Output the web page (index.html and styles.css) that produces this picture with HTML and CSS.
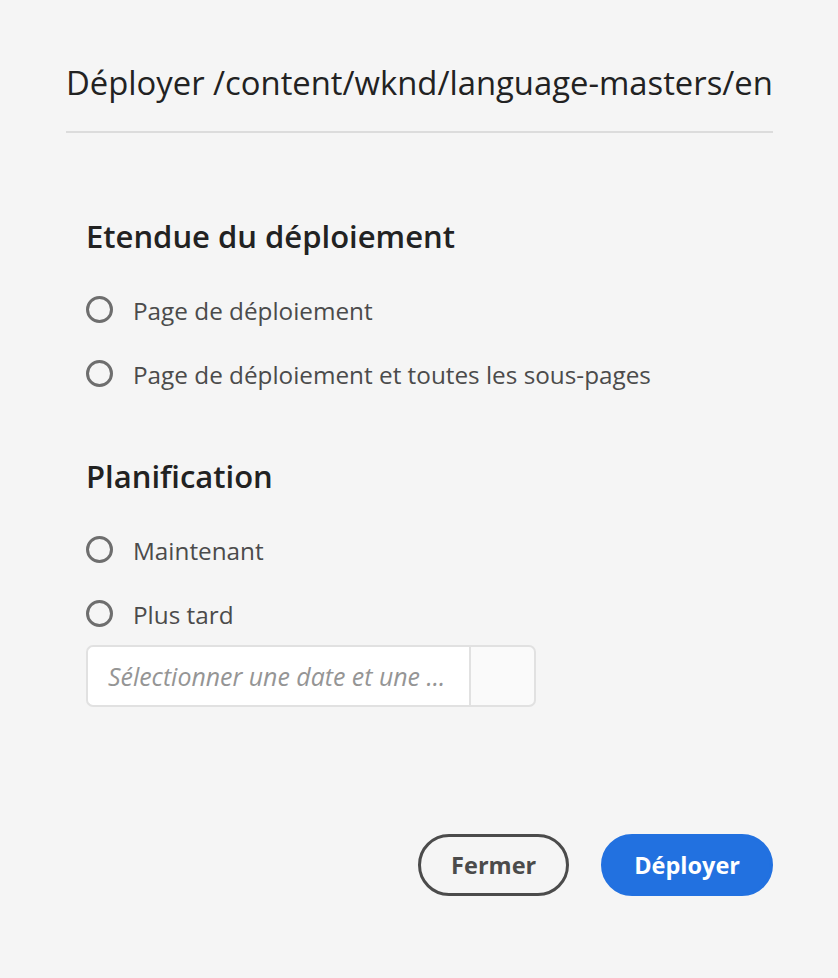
FILE: index.html
```html
<!DOCTYPE html>
<html lang="fr">
<head>
<meta charset="utf-8">
<title>Déployer</title>
<link rel="stylesheet" href="styles.css">
</head>
<body>
<div class="dialog">
  <h1 class="title">Déployer /content/wknd/language-masters/en</h1>
  <div class="divider"></div>
  <div class="content">
    <h2 class="heading first">Etendue du déploiement</h2>
    <div class="group">
      <label class="radio-row"><span class="radio"></span><span class="label">Page de déploiement</span></label>
      <label class="radio-row"><span class="radio"></span><span class="label">Page de déploiement et toutes les sous-pages</span></label>
    </div>
    <h2 class="heading second">Planification</h2>
    <div class="group">
      <label class="radio-row"><span class="radio"></span><span class="label">Maintenant</span></label>
      <label class="radio-row"><span class="radio"></span><span class="label">Plus tard</span></label>
    </div>
    <div class="datepicker">
      <div class="date-input">Sélectionner une date et une ...</div>
      <div class="date-button"></div>
    </div>
  </div>
  <div class="footer">
    <button class="btn btn-secondary">Fermer</button>
    <button class="btn btn-primary">Déployer</button>
  </div>
</div>
</body>
</html>
```
FILE: styles.css
```css
html, body {
  margin: 0;
  padding: 0;
  background: #f5f5f5;
}
body {
  font-family: "Open Sans", "Noto Sans", sans-serif;
  color: #2c2c2c;
}
.dialog {
  padding: 63px 65px 0 66px;
}
.title {
  margin: 0;
  font-size: 32.8px;
  line-height: 40px;
  font-weight: 500;
  color: #222222;
  white-space: nowrap;
}
.divider {
  margin-top: 28px;
  height: 2px;
  background: #dcdcdc;
}
.content {
  padding-left: 20px;
}
.heading {
  margin: 0;
  font-size: 31px;
  line-height: 36px;
  font-weight: 600;
  color: #222222;
}
.heading.first {
  margin-top: 85px;
}
.heading.second {
  margin-top: 53px;
}
.group {
  margin-top: 23px;
  display: flex;
  flex-direction: column;
}
.radio-row {
  height: 64px;
  display: flex;
  align-items: center;
  gap: 20px;
}
.radio {
  box-sizing: border-box;
  width: 27px;
  height: 27px;
  border: 3px solid #6e6e6e;
  border-radius: 50%;
  background: #f5f5f5;
  flex: none;
}
.label {
  font-size: 24.3px;
  line-height: 32px;
  color: #4b4b4b;
  margin-top: 4px;
}
.datepicker {
  display: flex;
  width: 450px;
  height: 62px;
}
.date-input {
  box-sizing: border-box;
  width: 383px;
  height: 62px;
  background: #ffffff;
  border: 2px solid #e1e1e1;
  border-right: none;
  border-radius: 7px 0 0 7px;
  padding-left: 20px;
  font-size: 24.9px;
  font-style: italic;
  color: #959595;
  line-height: 58px;
  white-space: nowrap;
  overflow: hidden;
}
.date-button {
  box-sizing: border-box;
  flex: 1;
  height: 62px;
  background: #fafafa;
  border: 2px solid #e1e1e1;
  border-radius: 0 7px 7px 0;
}
.footer {
  margin-top: 127px;
  display: flex;
  justify-content: flex-end;
  gap: 32px;
}
.btn {
  box-sizing: border-box;
  height: 62px;
  padding: 0 30px;
  border-radius: 31px;
  border: 3px solid #4b4b4b;
  font-family: "Open Sans", "Noto Sans", sans-serif;
  font-size: 23.5px;
  font-weight: 700;
  cursor: pointer;
}
.btn-secondary {
  background: transparent;
  color: #4b4b4b;
}
.btn-primary {
  background: #2271e0;
  border-color: #2271e0;
  color: #ffffff;
}
```
